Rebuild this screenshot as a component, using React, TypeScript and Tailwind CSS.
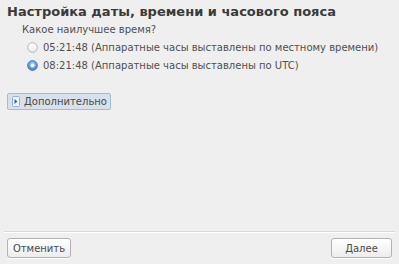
import React from 'react';

const Radio: React.FC<{ checked?: boolean }> = ({ checked }) => (
    <svg width="11" height="11" viewBox="0 0 11 11" className="shrink-0">
        <defs>
            <linearGradient id="rOff" x1="0" y1="0" x2="0" y2="1">
                <stop offset="0" stopColor="#ffffff" />
                <stop offset="1" stopColor="#ececec" />
            </linearGradient>
            <radialGradient id="rOn" cx="0.5" cy="0.35" r="0.6">
                <stop offset="0" stopColor="#a8cdf2" />
                <stop offset="1" stopColor="#3f84d1" />
            </radialGradient>
        </defs>
        {checked ? (
            <>
                <circle cx="5.5" cy="5.5" r="4.9" fill="url(#rOn)" stroke="#3a74b8" strokeWidth="0.8" />
                <circle cx="5.5" cy="5.5" r="2" fill="#f4f9ff" />
            </>
        ) : (
            <circle cx="5.5" cy="5.5" r="4.8" fill="url(#rOff)" stroke="#a5a5a5" strokeWidth="0.8" />
        )}
    </svg>
);

const Button: React.FC<{ children: React.ReactNode; className?: string }> = ({ children, className }) => (
    <button className={`h-[20px] rounded-[3px] border border-[#b2b2b2] bg-gradient-to-b from-[#ffffff] to-[#ededed] text-[10px] text-[#4a4a4a] shadow-[0_1px_0_rgba(255,255,255,0.8)] ${className ?? ''}`}>
        {children}
    </button>
);

export default function App() {
    return (
        <div className="w-[399px] h-[264px] bg-[#efefef] flex flex-col text-[#505050] font-['DejaVu_Sans',sans-serif]">
            <h1 className="pl-[7px] pt-[3px] text-[13px] font-bold leading-[17px] text-[#3a3a3a]">
                Настройка даты, времени и часового пояса
            </h1>

            <div className="pl-[22px] pt-[3px] text-[10px] leading-[13px]">Какое наилучшее время?</div>

            <div className="pl-[27px] pt-[5px] flex flex-col gap-[5px] text-[10px]">
                <label className="flex items-center gap-[5px] h-[13px]">
                    <Radio />
                    <span>05:21:48 (Аппаратные часы выставлены по местному времени)</span>
                </label>
                <label className="flex items-center gap-[5px] h-[13px]">
                    <Radio checked />
                    <span>08:21:48 (Аппаратные часы выставлены по UTC)</span>
                </label>
            </div>

            <div className="pl-[7px] pt-[21px]">
                <button className="h-[17px] flex items-center gap-[4px] pl-[4px] pr-[3px] rounded-[2px] border border-[#a3bcd6] bg-[#d7e1ec] text-[10px] text-[#4a4a4a]">
                    <svg width="8" height="11" viewBox="0 0 8 11">
                        <rect x="0.5" y="0.5" width="7" height="10" rx="1" fill="#eef4fb" stroke="#8fb0d4" />
                        <path d="M2.5 3 L5.5 5.5 L2.5 8 Z" fill="#3465a4" />
                    </svg>
                    Дополнительно
                </button>
            </div>

            <div className="flex-1" />

            <div className="mx-[4px] border-t border-[#dadada] border-b-white border-b" />

            <div className="flex justify-between px-[7px] pt-[5px] pb-[6px]">
                <Button className="w-[64px]">Отменить</Button>
                <Button className="w-[61px]">Далее</Button>
            </div>
        </div>
    );
}
